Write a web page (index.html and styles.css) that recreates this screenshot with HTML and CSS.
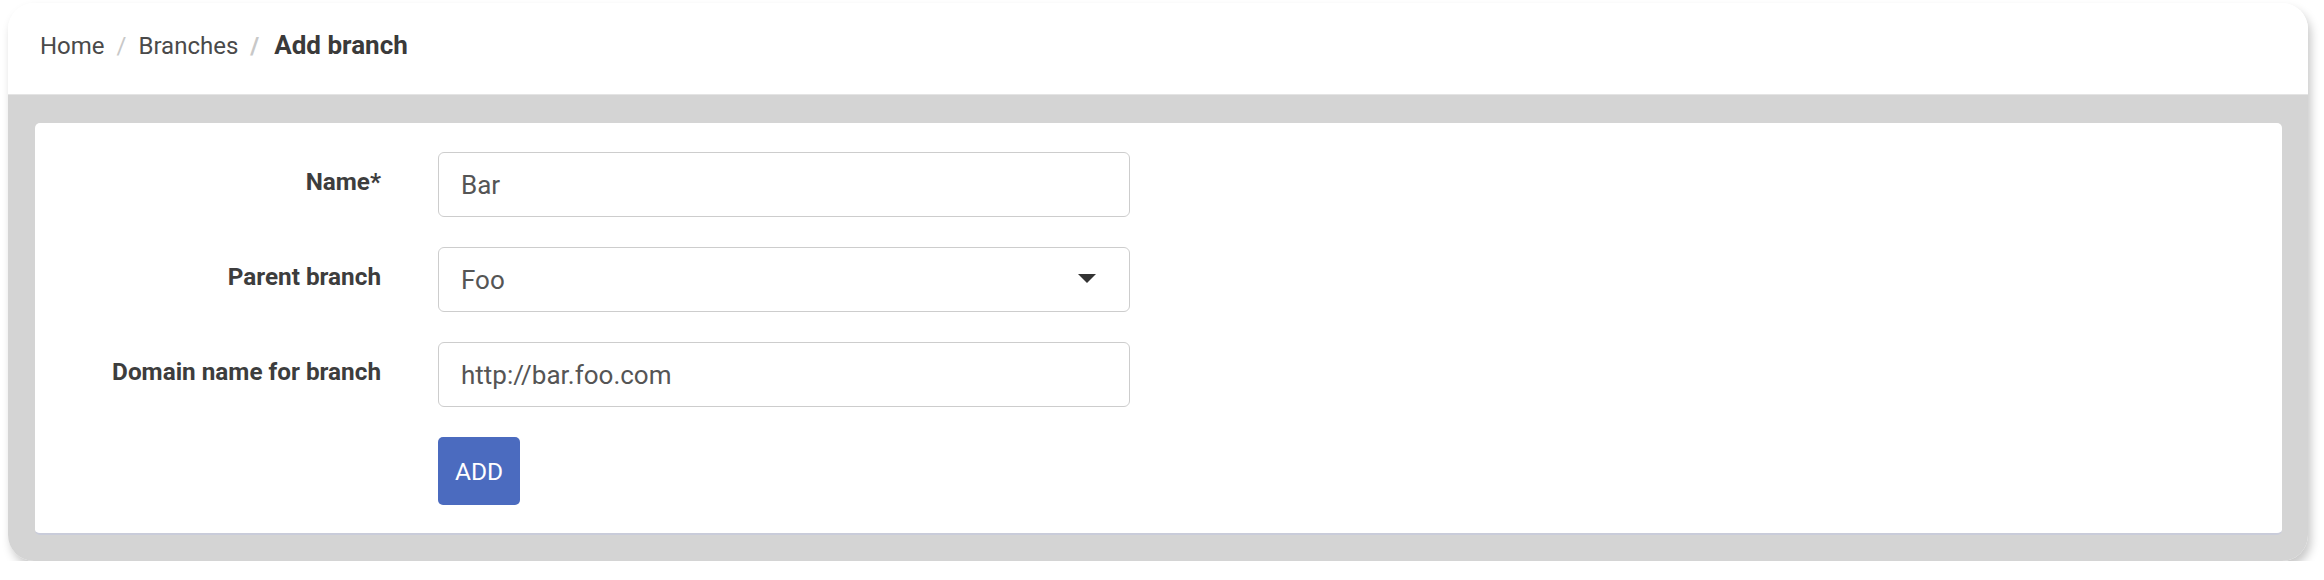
FILE: index.html
```html
<!DOCTYPE html>
<html lang="en">
<head>
  <meta charset="UTF-8" />
  <title>Add branch</title>
  <link rel="stylesheet" href="styles.css">
</head>
<body>
  <div class="frame">
    <div class="header">
      <ol class="breadcrumb">
        <li><a href="#">Home</a></li>
        <li><a href="#">Branches</a></li>
        <li class="active">Add branch</li>
      </ol>
    </div>

    <div class="content">
      <form class="card">
        <div class="form-row">
          <label for="name">Name*</label>
          <input type="text" id="name" value="Bar">
        </div>
        <div class="form-row">
          <label for="parent">Parent branch</label>
          <div class="select-wrap">
            <select id="parent">
              <option>Foo</option>
            </select>
            <span class="caret"></span>
          </div>
        </div>
        <div class="form-row">
          <label for="domain">Domain name for branch</label>
          <input type="text" id="domain" value="http://bar.foo.com">
        </div>
        <div class="form-row">
          <span></span>
          <div><button type="button">ADD</button></div>
        </div>
      </form>
    </div>
  </div>
</body>
</html>
```

FILE: styles.css
```css
body {
  margin: 0;
  font-family: Roboto, 'Liberation Sans', sans-serif;
  background: #fff;
  color: #333;
}

.frame {
  width: 2300px;
  margin: 3px 0 0 8px;
  border-radius: 26px;
  overflow: hidden;
  box-shadow: 3px 6px 10px rgba(0, 0, 0, 0.22);
}

.header {
  background: white;
  padding: 24px 32px 30px;
  border-bottom: 1px solid #e4e4e4;
}

.breadcrumb {
  display: flex;
  align-items: baseline;
  margin: 0;
  padding: 0;
  list-style: none;
  font-size: 24px;
  line-height: 36px;
}

.breadcrumb li + li::before {
  content: "/";
  color: #c8c8c8;
  font-size: 24px;
  padding: 0 12px;
}

.breadcrumb a {
  color: #4a4a4a;
  text-decoration: none;
}

.breadcrumb .active {
  font-size: 26px;
  font-weight: bold;
  color: #3a3a3a;
}

.breadcrumb .active::before {
  padding-right: 15px;
}

.content {
  background: #d4d4d4;
  padding: 28px 26px 26px 27px;
}

.card {
  display: grid;
  row-gap: 30px;
  background: white;
  border-radius: 5px;
  border-bottom: 2px solid #c9ccda;
  padding: 29px 0 28px;
  margin: 0;
}

.form-row {
  display: grid;
  grid-template-columns: 346px 692px;
  column-gap: 57px;
}

.form-row label {
  text-align: right;
  font-size: 24.3px;
  line-height: 36px;
  font-weight: bold;
  color: #3d3d3d;
  padding-top: 12px;
}

input, select {
  box-sizing: border-box;
  width: 100%;
  height: 65px;
  padding: 0 22px;
  font-family: inherit;
  font-size: 26px;
  color: #555;
  background: white;
  border: 1px solid #cdcdcd;
  border-radius: 6px;
  outline: none;
}

select {
  appearance: none;
  -webkit-appearance: none;
}

.select-wrap {
  position: relative;
}

.caret {
  position: absolute;
  right: 34px;
  top: 27px;
  width: 0;
  height: 0;
  border-left: 9px solid transparent;
  border-right: 9px solid transparent;
  border-top: 9px solid #333;
}

button {
  height: 68px;
  padding: 0 17px;
  border: none;
  border-radius: 5px;
  background: #4b6bbf;
  color: white;
  font-family: inherit;
  font-size: 24.5px;
  cursor: pointer;
}
```
